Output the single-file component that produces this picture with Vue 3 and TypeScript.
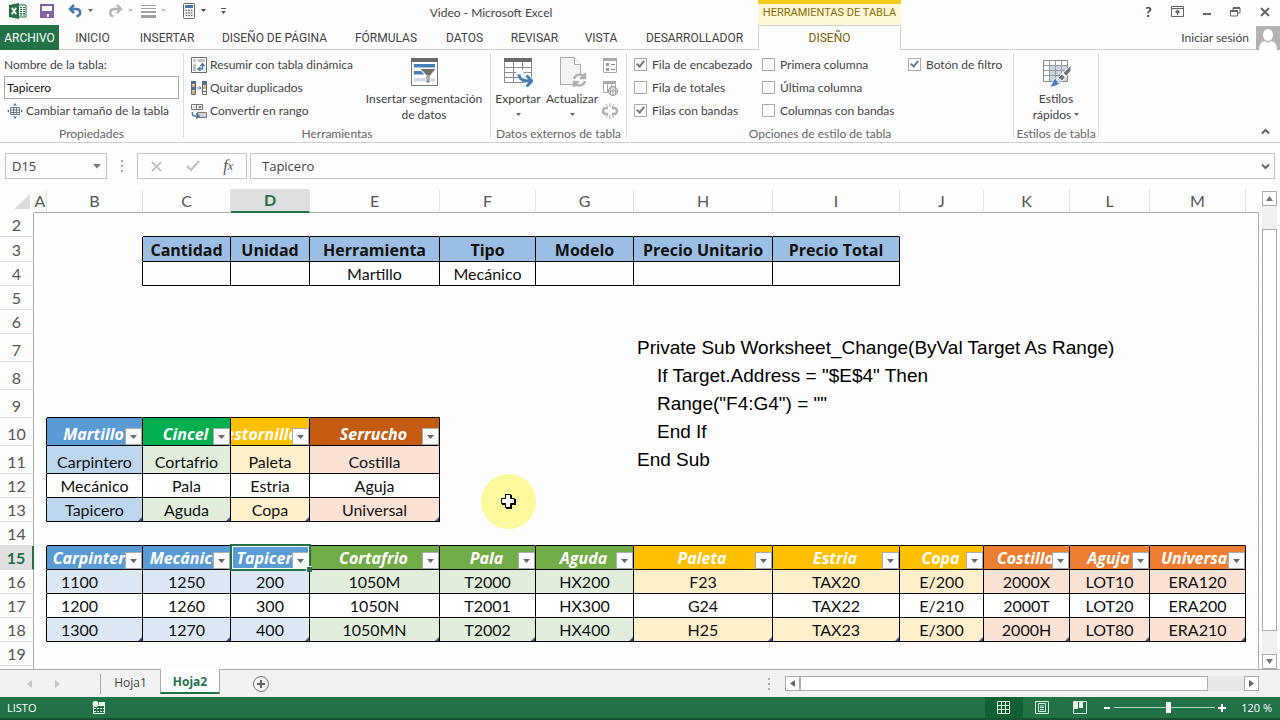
<script setup lang="ts">
import { ref } from 'vue'

interface Cell {
  text?: string
  tone?: string
  kind?: 'title' | 'filter' | 'body' | 'code'
  right?: boolean
  bottom?: boolean
  last?: boolean
  left?: boolean
  indent?: boolean
  selected?: boolean
}
interface Row {
  label: string
  height: number
  cells: Cell[]
}

const tabs = ['INICIO', 'INSERTAR', 'DISEÑO DE PÁGINA', 'FÓRMULAS', 'DATOS', 'REVISAR', 'VISTA', 'DESARROLLADOR']

const options = ref([
  { label: 'Fila de encabezado', on: true },
  { label: 'Fila de totales', on: false },
  { label: 'Filas con bandas', on: true },
  { label: 'Primera columna', on: false },
  { label: 'Última columna', on: false },
  { label: 'Columnas con bandas', on: false },
  { label: 'Botón de filtro', on: true },
])

const tableName = ref('Tapicero')
const cellRef = ref('D15')
const formula = ref('Tapicero')
const zoom = ref(54)

const columns = 'ABCDEFGHIJKLM'.split('')
const heights: Record<number, number> = { 3: 25, 7: 28, 8: 28, 9: 28, 10: 28, 11: 28 }

const rows: Row[] = []
for (let n = 2; n <= 20; n++) {
  rows.push({ label: n < 20 ? String(n) : '', height: heights[n] ?? 24, cells: columns.map(() => ({})) })
}
const at = (col: string, row: number): Cell => rows[row - 2].cells[columns.indexOf(col)]

function frame(col: string, row: number) {
  const c = columns.indexOf(col)
  Object.assign(rows[row - 2].cells[c], { right: true, bottom: true })
  rows[row - 3].cells[c].bottom = true
  if (c > 0) rows[row - 2].cells[c - 1].right = true
}

'Cantidad,Unidad,Herramienta,Tipo,Modelo,Precio Unitario,Precio Total'.split(',').forEach((text, i) => {
  const col = columns[i + 2]
  frame(col, 3)
  frame(col, 4)
  Object.assign(at(col, 3), { text, kind: 'title', tone: 'sky' })
})
Object.assign(at('E', 4), { text: 'Martillo', kind: 'body' })
Object.assign(at('F', 4), { text: 'Mecánico', kind: 'body' })

function listTable(col: string, row: number, tone: string, items: string[]) {
  items.forEach((text, i) => {
    frame(col, row + i)
    Object.assign(at(col, row + i), {
      text,
      kind: i === 0 ? 'filter' : 'body',
      tone: i === 0 ? tone : i % 2 ? `${tone}-band` : 'plain',
      last: i === items.length - 1,
    })
  })
}

listTable('B', 10, 'blue', ['Martillo', 'Carpintero', 'Mecánico', 'Tapicero'])
listTable('C', 10, 'emerald', ['Cincel', 'Cortafrio', 'Pala', 'Aguda'])
listTable('D', 10, 'amber', ['Destornillador', 'Paleta', 'Estria', 'Copa'])
listTable('E', 10, 'rust', ['Serrucho', 'Costilla', 'Aguja', 'Universal'])

listTable('B', 15, 'azure', ['Carpintero', '1100', '1200', '1300'])
listTable('C', 15, 'azure', ['Mecánico', '1250', '1260', '1270'])
listTable('D', 15, 'azure', ['Tapicero', '200', '300', '400'])
listTable('E', 15, 'green', ['Cortafrio', '1050M', '1050N', '1050MN'])
listTable('F', 15, 'green', ['Pala', 'T2000', 'T2001', 'T2002'])
listTable('G', 15, 'green', ['Aguda', 'HX200', 'HX300', 'HX400'])
listTable('H', 15, 'amber', ['Paleta', 'F23', 'G24', 'H25'])
listTable('I', 15, 'amber', ['Estria', 'TAX20', 'TAX22', 'TAX23'])
listTable('J', 15, 'amber', ['Copa', 'E/200', 'E/210', 'E/300'])
listTable('K', 15, 'orange', ['Costilla', '2000X', '2000T', '2000H'])
listTable('L', 15, 'orange', ['Aguja', 'LOT10', 'LOT20', 'LOT80'])
listTable('M', 15, 'orange', ['Universal', 'ERA120', 'ERA200', 'ERA210'])
for (const r of [16, 17, 18]) at('B', r).left = true
at('D', 15).selected = true

const code = [
  'Private Sub Worksheet_Change(ByVal Target As Range)',
  'If Target.Address = "$E$4" Then',
  'Range("F4:G4") = ""',
  'End If',
  'End Sub',
]
code.forEach((text, i) => Object.assign(at('H', 7 + i), { text, kind: 'code', indent: i > 0 && i < 4 }))

function cellClass(c: Cell) {
  return [c.kind, c.tone && `tone-${c.tone}`, { right: c.right, bottom: c.bottom, left: c.left, indent: c.indent }]
}
</script>

<template>
  <div class="app">
    <header class="titlebar">
      <div class="quick">
        <svg class="logo" width="18" height="16" viewBox="0 0 18 16" aria-hidden="true">
          <path d="M9 2h8v12H9z" fill="#fff" stroke="#217346" />
          <path d="M11 4.500h2M14 4.500h2M11 6.500h2M14 6.500h2M11 8.500h2M14 8.500h2M11 10.500h2M14 10.500h2M11 12h2M14 12h2" stroke="#217346" />
          <path d="M0 2 10 0v16L0 14z" fill="#217346" />
          <path d="M2.800 4.800 7.200 11.200M7.200 4.800 2.800 11.200" stroke="#fff" stroke-width="1.600" />
        </svg>
        <button class="save" aria-label="Guardar">
          <svg width="14" height="14" viewBox="0 0 14 14"><path d="M1 1h12v12H1z" fill="#fff" stroke="#8560a8" stroke-width="2" /><path d="M2 7h10v6H2z" fill="#8560a8" /><path d="M5 10h4v3H5z" fill="#fff" /><path d="M5 10h2v3H5z" fill="#8560a8" /></svg>
        </button>
        <button class="undo" aria-label="Deshacer">
          <svg width="26" height="14" viewBox="0 0 26 14"><path d="M6 1 2 5l4 4M2.500 5H8c5 0 6 6 .5 7.500" fill="none" stroke="#4678b0" stroke-width="2.600" /><path d="M20 5h5l-2.500 3z" fill="#666" /></svg>
        </button>
        <button class="redo" aria-label="Rehacer">
          <svg width="26" height="14" viewBox="0 0 26 14"><path d="M9 1l4 4-4 4M12.500 5H7C1 5 1 11 5 12.500" fill="none" stroke="#b5b5b5" stroke-width="2.400" /><path d="M20 5h5l-2.500 3z" fill="#bbb" /></svg>
        </button>
        <button class="lines" aria-label="Bordes">
          <svg width="27" height="14" viewBox="0 0 27 14"><path d="M0 1.500h15M0 4.500h15" stroke="#a0a0a0" /><path d="M0 8h15" stroke="#a0a0a0" stroke-width="2" /><path d="M0 12.500h15" stroke="#a0a0a0" stroke-width="3" /><path d="M20 5h5l-2.500 3z" fill="#bbb" /></svg>
        </button>
        <button class="calc" aria-label="Calculadora">
          <svg width="24" height="16" viewBox="0 0 24 16"><rect x=".5" y=".5" width="11" height="15" rx="1" fill="#fff" stroke="#666" /><path d="M2 2h8v3H2z" fill="#4678b0" /><path d="M2.500 7.500h7M2.500 10h7M2.500 12.500h7" stroke="#777" stroke-width="1.500" stroke-dasharray="1.800 .8" /><path d="M18 6h5l-2.500 3z" fill="#444" /></svg>
        </button>
        <button class="more" aria-label="Personalizar">
          <svg width="7" height="8" viewBox="0 0 7 8"><path d="M1 1.500h5" stroke="#555" /><path d="M1 4h5L3.500 7z" fill="#555" /></svg>
        </button>
      </div>
      <h1>Video - Microsoft Excel</h1>
      <div class="context">HERRAMIENTAS DE TABLA</div>
      <div class="window">
        <button aria-label="Ayuda" class="help">?</button>
        <button aria-label="Opciones de cinta">
          <svg width="13" height="11" viewBox="0 0 13 11"><path d="M.5.5h12v10H.5zM.5 2.500h12" fill="none" stroke="#666" /><path d="M6.500 9V4.500M4.500 6.500l2-2 2 2" fill="none" stroke="#666" stroke-width="1.300" /></svg>
        </button>
        <button aria-label="Minimizar">
          <svg width="10" height="11" viewBox="0 0 10 11"><path d="M1 8h8" stroke="#666" stroke-width="2" /></svg>
        </button>
        <button aria-label="Restaurar">
          <svg width="11" height="10" viewBox="0 0 11 10"><path d="M3 3V1h7v5H8" fill="none" stroke="#666" /><path d="M3 1h7" stroke="#666" stroke-width="2" /><path d="M.5 4h7v5h-7z" fill="#fff" stroke="#666" /><path d="M0 4h8" stroke="#666" stroke-width="2" /></svg>
        </button>
        <button aria-label="Cerrar">
          <svg width="10" height="10" viewBox="0 0 10 10"><path d="M1 1l8 8M9 1 1 9" stroke="#666" stroke-width="2" /></svg>
        </button>
      </div>
    </header>

    <nav class="tabs">
      <button class="file">ARCHIVO</button>
      <button v-for="t in tabs" :key="t">{{ t }}</button>
      <button class="active">DISEÑO</button>
      <a class="signin" href="#">Iniciar sesión
        <svg width="24" height="24" viewBox="0 0 24 24" aria-hidden="true"><path d="M0 0h24v24H0z" fill="#b3b3b3" /><ellipse cx="12" cy="9" rx="5" ry="6" fill="#fff" /><path d="M3 24c0-6 2-8 6-9 2 2 4 2 6 0 4 1 6 3 6 9z" fill="#fff" /></svg>
      </a>
    </nav>

    <section class="ribbon">
      <div class="group properties">
        <div class="content">
          <label for="table-name">Nombre de la tabla:</label>
          <input id="table-name" v-model="tableName" type="text" />
          <button class="item">
            <svg width="16" height="16" viewBox="0 0 16 16"><path d="M3.500 4.500h9v7h-9zM3.500 7h9M3.500 9.500h9M6.500 4.500v7M9.500 4.500v7" fill="#fff" stroke="#6a7a8a" /><path d="M8 0l2 2.500H6zM8 16l2-2.500H6zM0 8l2-1.500v3zM16 8l-2-1.500v3z" fill="#4678a0" /></svg>
            Cambiar tamaño de la tabla
          </button>
        </div>
        <p>Propiedades</p>
      </div>

      <div class="group tools">
        <div class="content split">
          <div class="stack">
            <button class="item">
              <svg width="16" height="16" viewBox="0 0 16 16"><path d="M.5.5h15v15H.5z" fill="#fff" stroke="#666" /><path d="M2 2h3v3H2zM6.500 2H14v3H6.500zM2 6.500h3V14H2z" fill="#bfc3c8" /><path d="M7.500 12h4V7M9.500 9l2-2.500 2 2.500M9.500 10l-2.500 2 2.500 2" fill="none" stroke="#4678a0" stroke-width="1.400" /></svg>
              Resumir con tabla dinámica
            </button>
            <button class="item">
              <svg width="16" height="16" viewBox="0 0 16 16"><path d="M.5 1.500h4v13h-4zM11.500 1.500h4v13h-4z" fill="#fff" stroke="#666" /><path d="M0 1h5v3H0zM0 7h5v3H0zM11 1h5v4h-5z" fill="#4d6e90" /><path d="M1 4.500h3V7H1zM1 10.500h3V14H1zM12 5.500h3V9h-3z" fill="#d8b070" /><path d="M12 11.500h3" stroke="#666" /><path d="M6 8h4M8.500 6.500 10 8 8.500 9.500" fill="none" stroke="#4678a0" /></svg>
              Quitar duplicados
            </button>
            <button class="item">
              <svg width="16" height="16" viewBox="0 0 16 16"><path d="M.5 1.500h11v5H.5zM5.500 1.500v5" fill="#fff" stroke="#777" /><path d="M2 4h2.500M7.500 3.500h3L9 5.500z" fill="#555" stroke="#777" stroke-width=".6" /><path d="M6.500 9.500h9v5h-9z" fill="#cfd4da" stroke="#777" /><path d="M1.500 9c-1 4 2 4.500 6 4M5 10.500 8 13l-3 2.500" fill="none" stroke="#4678a0" stroke-width="1.500" /></svg>
              Convertir en rango
            </button>
          </div>
          <button class="big">
            <svg width="30" height="30" viewBox="0 0 30 30"><path d="M2.500 1.500h26v27h-26z" fill="#fff" stroke="#777" /><path d="M2 1h27v4H2z" fill="#6a6a6a" /><path d="M5 7h21v3.500H5zM5 14h10v3.500H5z" fill="#4380b8" /><path d="M5 21h21v3.500H5z" fill="#cfdbe6" /><path d="M10.500 11.500h17L21 19v7h-4v-7z" fill="#707070" stroke="#fff" /><path d="M18 19l-5-5.500M19 18v6" stroke="#fff" stroke-width=".8" /></svg>
            <span>Insertar segmentación<br />de datos</span>
          </button>
        </div>
        <p>Herramientas</p>
      </div>

      <div class="group external">
        <div class="content split">
          <button class="big">
            <svg width="30" height="30" viewBox="0 0 30 30"><path d="M1.500 1.500h27v24h-27zM1.500 10.500h27M1.500 15.500h27M1.500 20.500h27M10.500 5v20M19.500 5v20" fill="#fff" stroke="#8a8a8a" /><path d="M1 1h28v4H1z" fill="#6a6a6a" /><path d="M13 15.500h5c0 5 2 7 8 7.500M22 17l6 6.500-6 6" fill="none" stroke="#fff" stroke-width="5" /><path d="M16 17.500c0 5 4 6.500 12 6.500M23.500 18.500l5.500 5.500-5.500 5.500" fill="none" stroke="#4380b8" stroke-width="3" /></svg>
            <span>Exportar</span>
            <svg class="caret" width="5" height="4" viewBox="0 0 5 4"><path d="M0 0h5L2.500 3z" fill="#666" /></svg>
          </button>
          <button class="big">
            <svg width="30" height="30" viewBox="0 0 30 30"><path d="M3.500.5h14l6 7v20h-20z" fill="#f4f2f4" stroke="#aaa" /><path d="M17.500.5v7h6" fill="#fff" stroke="#aaa" /><path d="M16 16h14v14H16z" fill="#fdfdfd" /><path d="M17 22c1-5 8-6 10-2M28 16v5h-5M28 24c-1 5-8 6-10 2M17 30v-5h5" fill="none" stroke="#b0b0b0" stroke-width="2.400" /></svg>
            <span>Actualizar</span>
            <svg class="caret" width="5" height="4" viewBox="0 0 5 4"><path d="M0 0h5L2.500 3z" fill="#666" /></svg>
          </button>
          <div class="stack">
            <button class="item" aria-label="Propiedades de datos"><svg width="16" height="16" viewBox="0 0 16 16"><path d="M1.500 1.500h13v14h-13z" fill="#fff" stroke="#aaa" /><path d="M1 1h14v3H1z" fill="#aaa" /><path d="M4 6h3v3H4zM4 11h3v3H4z" fill="#999" /><path d="M9 7.500h4M9 12.500h4" stroke="#888" /></svg></button>
            <button class="item" aria-label="Abrir en el explorador"><svg width="16" height="16" viewBox="0 0 16 16"><path d="M1.500 1.500h12v11h-12zM5.500 2v10M9.500 2v10" fill="#fff" stroke="#aaa" /><path d="M1 1h13v3H1z" fill="#aaa" /><circle cx="11" cy="11" r="4.500" fill="#fff" stroke="#999" /><path d="M6.500 11h9M11 6.500v9M9 7c-1 3-1 5 0 8M13 7c1 3 1 5 0 8" fill="none" stroke="#999" /></svg></button>
            <button class="item" aria-label="Desvincular"><svg width="16" height="16" viewBox="0 0 16 16"><path d="M6 5H4C0 5 0 11 4 11h2M10 5h2c4 0 4 6 0 6h-2" fill="none" stroke="#b0b0b0" stroke-width="2.400" /><path d="M8 0v4M4 1l2 3M12 1l-2 3M8 16v-4M4 15l2-3M12 15l-2-3" stroke="#b0b0b0" /></svg></button>
          </div>
        </div>
        <p>Datos externos de tabla</p>
      </div>

      <div class="group options">
        <div class="content checks">
          <label v-for="o in options" :key="o.label"><input v-model="o.on" type="checkbox" />{{ o.label }}</label>
        </div>
        <p>Opciones de estilo de tabla</p>
      </div>

      <div class="group styles">
        <div class="content split">
          <button class="big">
            <svg width="30" height="30" viewBox="0 0 30 30"><path d="M2.500 3.500h24v21h-24z" fill="#fff" stroke="#888" /><path d="M8 9h18v15H8z" fill="#c5d6e6" /><path d="M2.500 8.500h24M2.500 13.500h24M2.500 18.500h24M8.500 3.500v21M14.500 3.500v21M20.500 3.500v21" stroke="#999" /><path d="M30 8v6l-9 10-4-3z" fill="#777" stroke="#fff" /><path d="M21 16l4 4" stroke="#fff" stroke-width="2" /><path d="M8 30c4-2 3-9 8-9 5 1 5 9-8 9z" fill="#4380b8" stroke="#fff" /><path d="M15 23c2-1 3 1 2 3" fill="none" stroke="#fff" stroke-width="1.500" /></svg>
            <span>Estilos<br />rápidos <svg width="5" height="6" viewBox="0 0 5 6"><path d="M0 0h5L2.500 3z" fill="#666" /></svg></span>
          </button>
        </div>
        <p>Estilos de tabla</p>
      </div>
      <button class="collapse" aria-label="Contraer la cinta">
        <svg width="9" height="7" viewBox="0 0 9 7"><path d="M1 5.500 4.500 2 8 5.500" fill="none" stroke="#666" stroke-width="2" /></svg>
      </button>
    </section>

    <section class="formula-bar">
      <div class="name-box">
        <input v-model="cellRef" type="text" aria-label="Cuadro de nombres" />
        <button aria-label="Nombres"><svg width="8" height="5" viewBox="0 0 8 5"><path d="M0 0h8L4 4.500z" fill="#777" /></svg></button>
      </div>
      <svg class="dots" width="3" height="14" viewBox="0 0 3 14"><path d="M0 1h2v2H0zM0 6h2v2H0zM0 11h2v2H0z" fill="#aaa" /></svg>
      <div class="actions">
        <button aria-label="Cancelar"><svg width="11" height="11" viewBox="0 0 11 11"><path d="M1 1l9 9M10 1l-9 9" stroke="#c4c4c4" stroke-width="2" /></svg></button>
        <button aria-label="Introducir"><svg width="14" height="12" viewBox="0 0 14 12"><path d="M1 6l4 4 8-9" fill="none" stroke="#c4c4c4" stroke-width="2.500" /></svg></button>
        <button aria-label="Insertar función" class="fx">f<sub>x</sub></button>
      </div>
      <div class="formula">
        <input v-model="formula" type="text" aria-label="Barra de fórmulas" />
        <button aria-label="Expandir"><svg width="9" height="7" viewBox="0 0 9 7"><path d="M1 1.500 4.500 5 8 1.500" fill="none" stroke="#666" stroke-width="2" /></svg></button>
      </div>
    </section>

    <main class="workspace">
      <div class="sheet">
        <table>
          <colgroup>
            <col class="w-head" />
            <col v-for="c in columns" :key="c" :class="`w-${c}`" />
            <col />
          </colgroup>
          <thead>
            <tr>
              <th class="corner"><svg width="16" height="15" viewBox="0 0 16 15"><path d="M16 0v15H0z" fill="#dcdcdc" /></svg></th>
              <th v-for="c in columns" :key="c" scope="col" :class="{ current: c === 'D' }">{{ c }}</th>
              <th></th>
            </tr>
          </thead>
          <tbody>
            <tr v-for="row in rows" :key="row.label" :style="{ height: row.height + 'px' }">
              <th scope="row" :class="{ current: row.label === '15' }">{{ row.label }}</th>
              <td v-for="(cell, i) in row.cells" :key="i" :class="cellClass(cell)">
                <div v-if="cell.text" class="value"><span>{{ cell.text }}</span></div>
                <button v-if="cell.kind === 'filter'" class="drop" :aria-label="'Filtrar ' + cell.text">
                  <svg width="7" height="4" viewBox="0 0 7 4"><path d="M0 0h7L3.500 4z" fill="#666" /></svg>
                </button>
                <i v-if="cell.last" class="resize"></i>
                <i v-if="cell.selected" class="selection"></i>
              </td>
              <td></td>
            </tr>
          </tbody>
        </table>
        <svg class="pointer" width="55" height="55" viewBox="0 0 55 55" aria-hidden="true">
          <circle cx="27.500" cy="27.500" r="27.500" fill="#fbf99b" />
          <path d="M25 21h6v4h4v6h-4v4h-6v-4h-4v-6h4z" fill="#000" />
          <path d="M24.500 20.500h5v4h4v5h-4v4h-5v-4h-4v-5h4z" fill="#fff" stroke="#000" />
        </svg>
      </div>
      <div class="vscroll">
        <button aria-label="Subir"><svg width="7" height="5" viewBox="0 0 7 5"><path d="M0 5h7L3.500 0z" fill="#777" /></svg></button>
        <div class="track"><div class="thumb"></div></div>
        <button aria-label="Bajar"><svg width="7" height="5" viewBox="0 0 7 5"><path d="M0 0h7L3.500 5z" fill="#777" /></svg></button>
      </div>
    </main>

    <footer class="sheets">
      <div class="arrows">
        <button aria-label="Hoja anterior"><svg width="5" height="8" viewBox="0 0 5 8"><path d="M5 0v8L0 4z" fill="#c4c4c4" /></svg></button>
        <button aria-label="Hoja siguiente"><svg width="5" height="8" viewBox="0 0 5 8"><path d="M0 0v8l5-4z" fill="#c4c4c4" /></svg></button>
      </div>
      <button class="sheet-tab">Hoja1</button>
      <button class="sheet-tab open">Hoja2</button>
      <button class="add" aria-label="Hoja nueva"><svg width="18" height="18" viewBox="0 0 18 18"><circle cx="9" cy="9" r="7.500" fill="none" stroke="#777" /><path d="M9 5v8M5 9h8" stroke="#666" stroke-width="2" /></svg></button>
      <svg class="grip" width="3" height="14" viewBox="0 0 3 14"><path d="M0 1h2v2H0zM0 6h2v2H0zM0 11h2v2H0z" fill="#aaa" /></svg>
      <div class="hscroll">
        <button aria-label="Izquierda"><svg width="5" height="7" viewBox="0 0 5 7"><path d="M5 0v7L0 3.500z" fill="#666" /></svg></button>
        <div class="track"><div class="thumb"></div></div>
        <button aria-label="Derecha"><svg width="5" height="7" viewBox="0 0 5 7"><path d="M0 0v7l5-3.500z" fill="#666" /></svg></button>
      </div>
    </footer>

    <footer class="status">
      <span class="ready">LISTO</span>
      <button class="macro" aria-label="Grabar macro"><svg width="14" height="13" viewBox="0 0 14 13"><path d="M1.500 4.500h11v8h-11z" fill="none" stroke="#e8f5ec" /><path d="M7 1h6v4H7zM2 7h2v1H2zM5 7h2v1H5zM8 7h2v1H8zM11 7h1v1h-1zM2 10h2v1H2zM5 10h2v1H5zM8 10h2v1H8zM11 10h1v1h-1z" fill="#e8f5ec" /><circle cx="3.500" cy="3" r="3" fill="#e8f5ec" /></svg></button>
      <div class="views">
        <button class="on" aria-label="Normal"><svg width="14" height="13" viewBox="0 0 14 13"><path d="M.5.5h12v12H.5zM.5 4.500h12M.5 8.500h12M4.500.5v12M8.500.5v12" fill="none" stroke="#d5f0dd" /></svg></button>
        <button aria-label="Diseño de página"><svg width="14" height="13" viewBox="0 0 14 13"><path d="M.5.5h13v12H.5z" fill="none" stroke="#d5f0dd" /><path d="M3.500 2.500h7v8h-7zM5 5h4M5 6.500h4M5 8.500h4" fill="none" stroke="#d5f0dd" /></svg></button>
        <button aria-label="Saltos de página"><svg width="14" height="13" viewBox="0 0 14 13"><path d="M.5.5h13v12H.5z" fill="none" stroke="#d5f0dd" /><path d="M1 1h4v7H1zM6 1h4v6H6z" fill="#e8f5ec" /></svg></button>
      </div>
      <button class="step" aria-label="Alejar"><svg width="10" height="10" viewBox="0 0 10 10"><path d="M2 5h6" stroke="#fff" stroke-width="2" /></svg></button>
      <input v-model="zoom" type="range" min="0" max="100" aria-label="Zoom" />
      <button class="step" aria-label="Acercar"><svg width="10" height="10" viewBox="0 0 10 10"><path d="M1 5h8M5 1v8" stroke="#fff" stroke-width="2" /></svg></button>
      <span class="percent">120 %</span>
    </footer>
  </div>
</template>

<style>
body {
  margin: 0;
}
</style>

<style scoped>
.app {
  display: flex;
  flex-direction: column;
  height: 100vh;
  overflow: hidden;
  background: #fdfdfd;
  color: #444;
  font: 12px/16px Lato, "Open Sans", sans-serif;
}
.app *,
.app *::before,
.app *::after {
  box-sizing: border-box;
}
button,
input {
  margin: 0;
  padding: 0;
  border: 0;
  background: none;
  color: inherit;
  font: inherit;
}
button {
  display: flex;
  align-items: center;
  justify-content: center;
  white-space: nowrap;
}
svg {
  flex: none;
}

/* Title bar */
.titlebar {
  display: flex;
  flex: none;
  height: 25px;
}
.quick {
  display: flex;
  align-items: center;
  width: 224px;
  height: 22px;
  padding-left: 9px;
}
.save {
  margin-left: 13px;
}
.undo {
  margin-left: 14px;
}
.redo {
  margin-left: 14px;
}
.lines {
  margin-left: 7px;
}
.calc {
  margin-left: 15px;
}
.more {
  margin-left: 13px;
}
h1 {
  flex: 0 0 534px;
  margin: 0;
  font-size: 12px;
  font-weight: 400;
  line-height: 26px;
  text-align: center;
}
.context {
  flex: 0 0 143px;
  border-top: 4px solid #f2cb1d;
  background: #fdf8d8;
  color: #8a6a00;
  font: 11px/18px Roboto, "Open Sans", sans-serif;
  text-align: center;
  white-space: nowrap;
}
.window {
  display: flex;
  flex: 1;
  justify-content: flex-end;
  height: 23px;
  padding-right: 1px;
}
.window button {
  width: 29px;
}
.help {
  font-size: 14px;
  font-weight: 700;
}

/* Tabs */
.tabs {
  display: grid;
  flex: none;
  grid-template-columns: 59px 67px 82px 133px 90px 67px 73px 60px 127px 143px 1fr;
  height: 25px;
  border-bottom: 1px solid #d0d0d0;
}
.tabs button {
  font-family: Roboto, "Open Sans", sans-serif;
}
.file {
  background: #217346;
  color: #fff;
}
.tabs .active {
  height: 25px;
  border: 1px solid #d0d0d0;
  border-bottom: 0;
  background: #fdfdfd;
  color: #7d6300;
}
.signin {
  display: flex;
  align-items: center;
  justify-content: flex-end;
  gap: 7px;
  color: inherit;
  text-decoration: none;
}

/* Ribbon */
.ribbon {
  display: flex;
  flex: none;
  height: 93px;
  padding: 3px 0 4px;
  border-bottom: 1px solid #d0d0d0;
}
.group {
  display: flex;
  flex: none;
  flex-direction: column;
  border-right: 1px solid #dedede;
}
.group p {
  margin: 0;
  color: #666;
  line-height: 20px;
  text-align: center;
  white-space: nowrap;
}
.content {
  flex: none;
  height: 71px;
}
.properties {
  width: 184px;
}
.tools {
  width: 307px;
}
.external {
  width: 136px;
}
.options {
  width: 387px;
}
.styles {
  width: 85px;
}
.properties .content {
  display: grid;
  grid-template-rows: 23px 23px 23px;
  grid-template-columns: minmax(0, 1fr);
  padding: 0 4px;
}
.properties label {
  line-height: 23px;
}
.properties input {
  width: 100%;
  height: 23px;
  padding: 0 2px;
  border: 1px solid #ababab;
  background: #fff;
  color: #111;
}
.item {
  gap: 3px;
  height: 23px;
}
.properties .item {
  justify-self: start;
  padding-left: 3px;
}
.split {
  display: flex;
}
.stack {
  display: flex;
  flex-direction: column;
  align-items: flex-start;
}
.tools .stack {
  width: 174px;
  padding-left: 7px;
}
.external .stack {
  padding-left: 3px;
}
.big {
  flex-direction: column;
  justify-content: flex-start;
  padding-top: 4px;
}
.big span {
  margin-top: 4px;
  text-align: center;
}
.big .caret {
  margin-top: 6px;
}
.tools .big {
  flex: 1;
}
.external .big {
  width: 54px;
}
.styles .big {
  flex: 1;
}
.checks {
  display: grid;
  grid-template-rows: repeat(3, 23px);
  grid-template-columns: 128px 146px auto;
  grid-auto-flow: column;
  padding-left: 7px;
}
.checks label {
  display: flex;
  align-items: center;
  gap: 5px;
  white-space: nowrap;
}
.checks input {
  position: relative;
  flex: none;
  width: 13px;
  height: 13px;
  border: 1px solid #ababab;
  background: #fff;
  appearance: none;
}
.checks input:checked::after {
  content: "";
  display: block;
  width: 5px;
  height: 8px;
  margin: 0 0 0 3px;
  border: solid #777;
  border-width: 0 2px 2px 0;
  transform: rotate(40deg);
}
.collapse {
  align-self: flex-end;
  width: 13px;
  height: 13px;
  margin: 0 8px 0 auto;
}

/* Formula bar */
.formula-bar {
  display: flex;
  flex: none;
  height: 46px;
  padding: 10px 5px 10px;
  font: 13px/16px "Open Sans", "Noto Sans", sans-serif;
}
.name-box,
.actions,
.formula {
  display: flex;
  border: 1px solid #c6c6c6;
}
.name-box {
  width: 102px;
}
.name-box input {
  width: 82px;
  padding-left: 6px;
}
.name-box button {
  width: 18px;
}
.dots {
  align-self: center;
  margin: 0 13px 0 14px;
}
.actions {
  width: 110px;
  padding-left: 1px;
}
.actions button {
  width: 36px;
}
.actions .fx {
  color: #555;
  font: italic 16px/20px "Liberation Serif", serif;
}
.fx sub {
  font-size: 12px;
  line-height: 12px;
}
.formula {
  flex: 1;
  margin-left: 3px;
}
.formula input {
  flex: 1;
  padding-left: 11px;
}
.formula button {
  width: 17px;
}

/* Worksheet */
.workspace {
  display: flex;
  flex: 1;
  min-height: 0;
}
.sheet {
  position: relative;
  flex: 1;
  min-width: 0;
  overflow: hidden;
}
table {
  width: 100%;
  border-collapse: separate;
  border-spacing: 0;
  table-layout: fixed;
  font: 16px/20px Lato, "Open Sans", sans-serif;
}
.w-head { width: 34px; }
.w-A { width: 13px; }
.w-B, .w-F, .w-M { width: 96px; }
.w-C { width: 88px; }
.w-D { width: 79px; }
.w-E { width: 130px; }
.w-G { width: 98px; }
.w-H { width: 139px; }
.w-I { width: 127px; }
.w-J { width: 84px; }
.w-K { width: 86px; }
.w-L { width: 80px; }
th,
td {
  padding: 0;
}
th {
  color: #555;
  font-weight: 400;
  text-align: center;
}
thead tr {
  height: 24px;
}
thead th {
  border-right: 1px solid #e2e2e2;
  border-bottom: 1px solid #ababab;
}
thead th:last-child {
  border-right-color: transparent;
}
.corner {
  padding: 2px 3px 0 0;
  border-right-color: transparent;
  border-bottom-color: transparent;
  text-align: right;
}
.corner svg {
  display: block;
  margin-left: auto;
}
thead .current {
  border-bottom: 2px solid #217346;
  background: #dfdfdf;
  color: #217346;
  font-weight: 700;
}
tbody th {
  padding-bottom: 1px;
  border-right: 1px solid #ababab;
  border-bottom: 1px solid #dedede;
  vertical-align: bottom;
}
tbody .current {
  border-right: 2px solid #217346;
  background: #e0e0e0;
  color: #217346;
  font-weight: 700;
}
td {
  position: relative;
  padding-bottom: 1px;
  border-right: 1px solid transparent;
  border-bottom: 1px solid transparent;
  color: #111;
  vertical-align: bottom;
}
td:last-child {
  border-right-color: #ababab;
}
td.right {
  border-right-color: #000;
}
td.bottom {
  border-bottom-color: #000;
}
.value {
  display: flex;
  justify-content: center;
  overflow: hidden;
  white-space: nowrap;
}
.value span {
  flex: none;
}
.left .value {
  padding-right: 30px;
}
.title,
.filter {
  font: 700 16px/20px "Open Sans", "Noto Sans", sans-serif;
}
.filter {
  color: #fff;
  font-style: italic;
}
.filter .value {
  padding-right: 2px;
}
td.code {
  padding: 0;
  vertical-align: top;
}
.code .value {
  justify-content: flex-start;
  overflow: visible;
  padding-left: 3px;
  color: #000;
  font: 19px/27px "Liberation Sans", Arial, sans-serif;
}
.code.indent .value {
  padding-left: 23px;
}
.drop {
  position: absolute;
  right: 0;
  bottom: 0;
  width: 17px;
  height: 17px;
  border: 1px solid #ababab;
  background: #f8fafc;
}
.resize {
  position: absolute;
  right: 0;
  bottom: 0;
  width: 4px;
  height: 4px;
  background: #44508a;
  clip-path: polygon(100% 0, 100% 100%, 0 100%);
}
.selection {
  position: absolute;
  z-index: 2;
  inset: -2px -2px -2px -1px;
  border: 2px solid #217346;
  box-shadow: inset 0 0 0 1px #fff;
}
.selection::after {
  content: "";
  position: absolute;
  right: -3px;
  bottom: -3px;
  width: 6px;
  height: 6px;
  border: solid #fff;
  border-width: 1px 0 0 1px;
  background: #217346;
}
.tone-sky { background: #9bbfe4; }
.tone-blue, .tone-azure { background: #5b9bd5; }
.tone-blue-band { background: #bdd7ee; }
.tone-azure-band { background: #dce9f4; }
.tone-emerald { background: #00b050; }
.tone-green { background: #70ad47; }
.tone-emerald-band, .tone-green-band { background: #e0eedb; }
.tone-amber { background: #ffc000; }
.tone-amber-band { background: #fdf0cb; }
.tone-rust { background: #c55a11; }
.tone-orange { background: #ed7d31; }
.tone-rust-band, .tone-orange-band { background: #fae2d5; }
.tone-plain { background: #fff; }
.pointer {
  position: absolute;
  top: 285px;
  left: 481px;
}

/* Scroll bars */
.vscroll {
  display: flex;
  flex: none;
  flex-direction: column;
  width: 21px;
  padding: 2px 3px 0 3px;
}
.vscroll button,
.hscroll button {
  flex: none;
  width: 15px;
  height: 15px;
  border: 1px solid #ababab;
  background: #fff;
}
.vscroll .track {
  flex: 1;
  width: 15px;
  padding: 23px 0;
  background: #f0f0f0;
}
.thumb {
  height: 100%;
  border: 1px solid #ababab;
  background: #fff;
}

/* Sheet tabs */
.sheets {
  display: flex;
  flex: none;
  align-items: center;
  height: 28px;
  border-top: 1px solid #ababab;
  background: #f2f2f2;
  font: 12px/16px "Open Sans", "Noto Sans", sans-serif;
}
.arrows {
  display: flex;
  gap: 23px;
  width: 101px;
  height: 20px;
  padding-left: 27px;
  border-right: 1px solid #ababab;
}
.sheet-tab {
  align-self: flex-start;
  width: 59px;
  height: 25px;
}
.sheet-tab.open {
  width: 60px;
  margin-top: -1px;
  padding-top: 3px;
  border: 1px solid #ababab;
  border-top: 0;
  border-bottom: 2px solid #217346;
  background: #fff;
  color: #217346;
  font-weight: 700;
}
.add {
  margin-left: 32px;
}
.grip {
  margin-left: auto;
}
.hscroll {
  display: flex;
  flex: 0 0 474px;
  margin: 0 21px 0 14px;
}
.hscroll .track {
  flex: 1;
  height: 15px;
  padding-right: 36px;
  background: #e8e8e8;
}

/* Status bar */
.status {
  display: flex;
  flex: none;
  align-items: center;
  height: 23px;
  padding: 0 8px 0 7px;
  border-bottom: 2px solid #184f34;
  background: #217346;
  color: #fff;
  font: 11px/16px "Open Sans", "Noto Sans", sans-serif;
}
.ready {
  width: 85px;
}
.views {
  display: flex;
  align-self: stretch;
  margin-left: auto;
}
.views button {
  width: 38px;
}
.views .on {
  background: #106034;
}
.step {
  width: 14px;
}
.views + .step {
  margin-left: 1px;
}
.status input {
  width: 101px;
  height: 12px;
  background: linear-gradient(#b5d5c1, #b5d5c1) center / 100% 1px no-repeat;
  appearance: none;
}
.status input::-webkit-slider-thumb {
  width: 5px;
  height: 11px;
  background: #fff;
  appearance: none;
}
.percent {
  width: 43px;
  text-align: right;
}
</style>
